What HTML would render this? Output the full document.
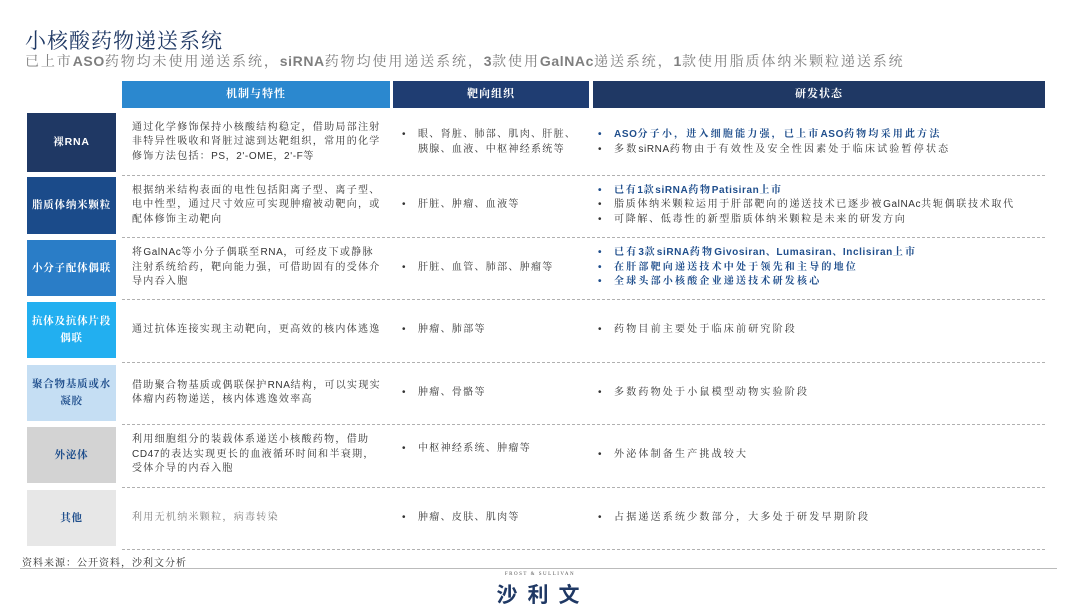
<!DOCTYPE html>
<html><head><meta charset="utf-8"><style>
*{margin:0;padding:0;box-sizing:border-box}
body{width:1080px;height:607px;background:#fff;position:relative;overflow:hidden;font-family:"Liberation Sans","Noto Serif CJK SC","Noto Sans CJK SC",serif;}
.a{position:absolute}
.t1{left:25px;top:25px;font-size:21px;color:#1f3864;letter-spacing:1px;font-family:"Liberation Sans","Noto Serif CJK SC",serif}
.t2{left:25px;top:51px;font-size:14px;color:#7f7f7f;letter-spacing:1.9px}
.t2 b{font-family:"Liberation Sans",sans-serif;letter-spacing:0.6px}
.h{top:81px;height:27px;color:#fff;font-size:11px;text-align:center;line-height:27px;font-weight:bold;letter-spacing:1px}
.lb{left:27px;width:89px;display:flex;align-items:center;justify-content:center;text-align:center;font-size:10.5px;font-weight:bold;color:#fff;line-height:17px;letter-spacing:0.8px}
.sep{left:122px;width:923px;border-top:1px dashed #b0b0b0;height:0}
.c{font-size:10px;line-height:14.5px;color:#333;display:flex;align-items:center;letter-spacing:1.3px}
.c2{left:132px;width:253px}
.c3{left:402px;width:182px}
.c4{left:598px;width:447px;letter-spacing:2.2px}
i{font-style:normal;letter-spacing:0.6px}
ul{list-style:none}
li{padding-left:16px;position:relative}
li:before{content:"•";position:absolute;left:0}
.bl{color:#1f4e8c;font-weight:bold}
</style></head><body>
<div class="a t1">小核酸药物递送系统</div>
<div class="a t2">已上市<b>ASO</b>药物均未使用递送系统，<b>siRNA</b>药物均使用递送系统，<b>3</b>款使用<b>GalNAc</b>递送系统，<b>1</b>款使用脂质体纳米颗粒递送系统</div>

<div class="a h" style="left:122px;width:268px;background:#2b88cf">机制与特性</div>
<div class="a h" style="left:393px;width:196px;background:#1f3d72">靶向组织</div>
<div class="a h" style="left:593px;width:452px;background:#1f3864">研发状态</div>

<div class="a lb" style="top:113px;height:59px;background:#1f3864">裸RNA</div>
<div class="a lb" style="top:177px;height:57px;background:#1b4b8a">脂质体纳米颗粒</div>
<div class="a lb" style="top:240px;height:56px;background:#2a7dc7">小分子配体偶联</div>
<div class="a lb" style="top:302px;height:56px;background:#22aff0">抗体及抗体片段<br>偶联</div>
<div class="a lb" style="top:365px;height:56px;background:#c5def3;color:#1f4e8c">聚合物基质或水<br>凝胶</div>
<div class="a lb" style="top:427px;height:56px;background:#d3d3d3;color:#1f4e8c">外泌体</div>
<div class="a lb" style="top:490px;height:56px;background:#e7e7e7;color:#1f4e8c">其他</div>

<div class="a sep" style="top:175px"></div>
<div class="a sep" style="top:237px"></div>
<div class="a sep" style="top:299px"></div>
<div class="a sep" style="top:362px"></div>
<div class="a sep" style="top:424px"></div>
<div class="a sep" style="top:487px"></div>
<div class="a sep" style="top:549px"></div>

<div class="a c c2" style="top:113px;height:59px"><span>通过化学修饰保持小核酸结构稳定，借助局部注射非特异性吸收和肾脏过滤到达靶组织，常用的化学修饰方法包括：<i>PS，2'-OME，2'-F</i>等</span></div>
<div class="a c c3" style="top:113px;height:59px"><ul><li>眼、肾脏、肺部、肌肉、肝脏、胰腺、血液、中枢神经系统等</li></ul></div>
<div class="a c c4" style="top:113px;height:59px"><ul><li class="bl"><i>ASO</i>分子小，进入细胞能力强，已上市<i>ASO</i>药物均采用此方法</li><li>多数<i>siRNA</i>药物由于有效性及安全性因素处于临床试验暂停状态</li></ul></div>

<div class="a c c2" style="top:177px;height:57px">根据纳米结构表面的电性包括阳离子型、离子型、电中性型，通过尺寸效应可实现肿瘤被动靶向，或配体修饰主动靶向</div>
<div class="a c c3" style="top:177px;height:57px"><ul><li>肝脏、肿瘤、血液等</li></ul></div>
<div class="a c c4" style="top:177px;height:57px;letter-spacing:1.7px"><ul><li class="bl">已有<i>1</i>款<i>siRNA</i>药物<i>Patisiran</i>上市</li><li>脂质体纳米颗粒运用于肝部靶向的递送技术已逐步被<i>GalNAc</i>共轭偶联技术取代</li><li>可降解、低毒性的新型脂质体纳米颗粒是未来的研发方向</li></ul></div>

<div class="a c c2" style="top:240px;height:56px"><span>将<i>GalNAc</i>等小分子偶联至<i>RNA</i>，可经皮下或静脉注射系统给药，靶向能力强，可借助固有的受体介导内吞入胞</span></div>
<div class="a c c3" style="top:240px;height:56px"><ul><li>肝脏、血管、肺部、肿瘤等</li></ul></div>
<div class="a c c4" style="top:240px;height:56px"><ul class="bl"><li>已有<i>3</i>款<i>siRNA</i>药物<i>Givosiran、Lumasiran、Inclisiran</i>上市</li><li>在肝部靶向递送技术中处于领先和主导的地位</li><li>全球头部小核酸企业递送技术研发核心</li></ul></div>

<div class="a c c2" style="top:302px;height:56px">通过抗体连接实现主动靶向，更高效的核内体逃逸</div>
<div class="a c c3" style="top:302px;height:56px"><ul><li>肿瘤、肺部等</li></ul></div>
<div class="a c c4" style="top:302px;height:56px"><ul><li>药物目前主要处于临床前研究阶段</li></ul></div>

<div class="a c c2" style="top:365px;height:56px"><span>借助聚合物基质或偶联保护<i>RNA</i>结构，可以实现实体瘤内药物递送，核内体逃逸效率高</span></div>
<div class="a c c3" style="top:365px;height:56px"><ul><li>肿瘤、骨骼等</li></ul></div>
<div class="a c c4" style="top:365px;height:56px"><ul><li>多数药物处于小鼠模型动物实验阶段</li></ul></div>

<div class="a c c2" style="top:427px;height:56px"><span>利用细胞组分的装载体系递送小核酸药物，借助<br><i>CD47</i>的表达实现更长的血液循环时间和半衰期，<br>受体介导的内吞入胞</span></div>
<div class="a c c3" style="top:427px;height:44px"><ul><li>中枢神经系统、肿瘤等</li></ul></div>
<div class="a c c4" style="top:427px;height:56px"><ul><li>外泌体制备生产挑战较大</li></ul></div>

<div class="a c c2" style="top:490px;height:56px;color:#808080">利用无机纳米颗粒，病毒转染</div>
<div class="a c c3" style="top:490px;height:56px"><ul><li>肿瘤、皮肤、肌肉等</li></ul></div>
<div class="a c c4" style="top:490px;height:56px"><ul><li>占据递送系统少数部分，大多处于研发早期阶段</li></ul></div>

<div class="a" style="left:22px;top:554px;font-size:10px;color:#333;letter-spacing:1px">资料来源：公开资料，沙利文分析</div>
<div class="a" style="left:20px;top:568px;width:1037px;border-top:1px solid #bbb"></div>
<div class="a" style="left:485px;top:572px;width:110px;text-align:center;font-size:5px;letter-spacing:1.5px;color:#555;font-family:'Liberation Serif',serif">FROST &amp; SULLIVAN</div>
<div class="a" style="left:488px;top:579px;width:110px;text-align:center;font-size:21px;font-weight:bold;letter-spacing:10px;color:#1f3864;font-family:'Liberation Sans','Noto Sans CJK SC',sans-serif">沙利文</div>
</body></html>
